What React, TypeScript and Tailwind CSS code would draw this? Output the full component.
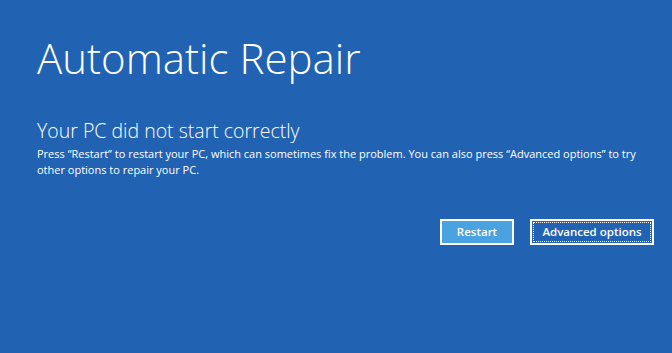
export default function App() {
  return (
    <div className="h-[353px] w-[672px] overflow-hidden bg-[#2163b2] font-['Open_Sans',sans-serif] text-white">
      <div className="pl-[37px] pt-[30px]">
        <h1 className="text-[42px] font-light leading-[56px]">Automatic Repair</h1>
        <h2 className="mt-[32px] text-[19.5px] font-light leading-[26px]">Your PC did not start correctly</h2>
        <p className="mt-[2px] w-[620px] text-[11px] leading-[16px]">
          Press “Restart” to restart your PC, which can sometimes fix the problem. You can also press “Advanced options” to try other options to repair your PC.
        </p>
      </div>
      <div className="mt-[41px] flex justify-end gap-[16px] pr-[18px]">
        <button type="button" className="h-[26px] w-[74px] border-2 border-white bg-[#4aa3e0] text-[11.5px] font-semibold">
          Restart
        </button>
        <button type="button" className="h-[26px] w-[124px] border-2 border-white bg-[#2163b2] p-[1px] text-[11.5px] font-semibold">
          <span className="flex h-full w-full items-center justify-center border border-dotted border-white">Advanced options</span>
        </button>
      </div>
    </div>
  );
}
